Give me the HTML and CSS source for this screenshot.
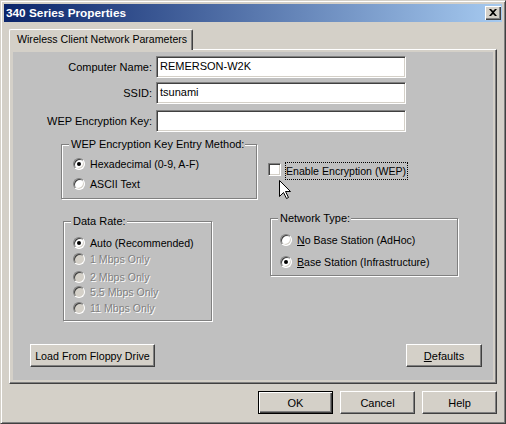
FILE: index.html
```html
<!DOCTYPE html>
<html>
<head>
<meta charset="utf-8">
<link rel="stylesheet" href="styles.css">
</head>
<body>
<div class="window">
  <div class="titlebar">
    <span class="title">340 Series Properties</span>
    <span class="close"><svg width="8" height="7" viewBox="0 0 8 7"><path d="M0 0h2l2 2 2-2h2L5 3.5 8 7H6L4 5 2 7H0l3-3.5z" fill="#000"/></svg></span>
  </div>
  <div class="tabs"><div class="tab">Wireless Client Network Parameters</div></div>
  <div class="panel">
    <div class="page">
      <div class="field f1"><span class="label">Computer Name:</span><div class="input">REMERSON-W2K</div></div>
      <div class="field f2"><span class="label">SSID:</span><div class="input">tsunami</div></div>
      <div class="field f3"><span class="label">WEP Encryption Key:</span><div class="input"></div></div>

      <div class="middle">
        <div class="col-left">
          <div class="group g-wep">
            <span class="legend">WEP Encryption Key Entry Method:</span>
            <div class="opt"><span class="radio checked"></span><span class="txt">Hexadecimal (0-9, A-F)</span></div>
            <div class="opt o2"><span class="radio"></span><span class="txt">ASCII Text</span></div>
          </div>
          <div class="group g-rate">
            <span class="legend">Data Rate:</span>
            <div class="opt"><span class="radio checked"></span><span class="txt">Auto (Recommended)</span></div>
            <div class="opt r1 disabled"><span class="radio"></span><span class="txt">1 Mbps Only</span></div>
            <div class="opt r2 disabled"><span class="radio"></span><span class="txt">2 Mbps Only</span></div>
            <div class="opt r3 disabled"><span class="radio"></span><span class="txt">5.5 Mbps Only</span></div>
            <div class="opt r4 disabled"><span class="radio"></span><span class="txt">11 Mbps Only</span></div>
          </div>
        </div>
        <div class="col-right">
          <div class="check-row"><span class="checkbox"></span><span class="focus">Enable Encryption (WEP)</span></div>
          <svg class="cursor" width="12" height="20" viewBox="0 0 12 20"><path d="M0.5 0.5V16.5L4.5 12.5L7.5 18.5L9.5 17.5L6.5 11.5H11.5Z" fill="#fff" stroke="#000" stroke-width="1" stroke-linejoin="miter"/></svg>
          <div class="group g-net">
            <span class="legend">Network Type:</span>
            <div class="opt"><span class="radio"></span><span class="txt"><u>N</u>o Base Station (AdHoc)</span></div>
            <div class="opt n2"><span class="radio checked"></span><span class="txt"><u>B</u>ase Station (Infrastructure)</span></div>
          </div>
        </div>
      </div>

      <div class="page-buttons">
        <div class="btn load">Load From Floppy Drive</div>
        <div class="btn defaults"><span><u>D</u>efaults</span></div>
      </div>
    </div>
  </div>
  <div class="buttons">
    <div class="btn default">OK</div>
    <div class="btn">Cancel</div>
    <div class="btn">Help</div>
  </div>
</div>
</body>
</html>
```

FILE: styles.css
```css
* { box-sizing: border-box; }
html, body { margin: 0; padding: 0; background: #d4d0c8; }
body {
  font-family: "Liberation Sans", Arial, sans-serif;
  font-size: 11px;
  color: #000;
}
.window {
  width: 506px;
  height: 424px;
  border: 1px solid;
  border-color: #d4d0c8 #404040 #404040 #d4d0c8;
  box-shadow: inset 1px 1px 0 #fff, inset -1px -1px 0 #808080;
  padding: 3px;
  background: #d4d0c8;
  display: flex;
  flex-direction: column;
}
.titlebar {
  height: 18px;
  flex: none;
  display: flex;
  align-items: center;
  justify-content: space-between;
  padding-left: 2px;
  background: linear-gradient(to right, #0a246a, #a6caf0);
}
.title {
  color: #fff;
  font-weight: bold;
  font-size: 11.8px;
}
.close {
  width: 16px;
  height: 14px;
  margin-right: 1px;
  background: #d4d0c8;
  box-shadow: inset 1px 1px 0 #fff, inset -1px -1px 0 #404040, inset -2px -2px 0 #808080;
  display: flex;
  align-items: center;
  justify-content: center;
  padding-bottom: 1px;
}
.tabs {
  margin-top: 7px;
  padding-left: 5px;
  height: 20px;
  flex: none;
  display: flex;
}
.tab {
  position: relative;
  z-index: 1;
  width: 184px;
  height: 21px;
  background: #d4d0c8;
  border-left: 1px solid #fff;
  border-top: 1px solid #fff;
  border-right: 1px solid #404040;
  border-top-left-radius: 2px;
  border-top-right-radius: 2px;
  box-shadow: inset -1px 0 0 #808080;
  padding-left: 7px;
  line-height: 18px;
  white-space: nowrap;
  font-size: 10.6px;
}
.panel {
  margin: 0 5px;
  height: 335px;
  flex: none;
  border: 1px solid;
  border-color: #fff #404040 #404040 #fff;
  box-shadow: inset -1px -1px 0 #808080;
  padding: 2px 3px 3px 3px;
  display: flex;
}
.page {
  flex: 1;
  background: #c0c0c0;
  display: flex;
  flex-direction: column;
}
.field {
  display: flex;
  align-items: center;
  height: 22px;
  flex: none;
}
.f1 { margin-top: 4px; }
.f2 { margin-top: 4px; }
.f3 { margin-top: 6px; }
.label {
  width: 139px;
  text-align: right;
  white-space: nowrap;
}
.input {
  margin-left: 4px;
  width: 250px;
  height: 22px;
  background: #fff;
  border: 1px solid;
  border-color: #808080 #fff #fff #808080;
  box-shadow: inset 1px 1px 0 #404040, inset -1px -1px 0 #d4d0c8;
  padding-left: 3px;
  line-height: 19px;
}
.middle {
  display: flex;
  align-items: flex-start;
  flex: none;
}
.col-left {
  margin-left: 48px;
  width: 196px;
}
.col-right {
  margin-left: 11px;
  position: relative;
}
.group {
  position: relative;
  border: 1px solid #808080;
  box-shadow: 1px 1px 0 #fff, inset 1px 1px 0 #fff;
}
.legend {
  position: absolute;
  top: -8px;
  left: 7px;
  padding: 0 1px 0 2px;
  background: #c0c0c0;
  line-height: 14px;
  white-space: nowrap;
}
.g-wep {
  margin-top: 12px;
  width: 196px;
  height: 55px;
  padding: 12px 0 0 11px;
}
.g-rate {
  margin-top: 22px;
  margin-left: 2px;
  width: 149px;
  height: 100px;
  padding: 14px 0 0 9px;
}
.g-net {
  margin-top: 38px;
  margin-left: 2px;
  width: 188px;
  height: 58px;
  padding: 14px 0 0 9px;
}
.opt {
  display: flex;
  align-items: center;
  height: 13px;
  white-space: nowrap;
}
.o2 { margin-top: 7px; }
.r1 { margin-top: 3px; }
.r2 { margin-top: 5px; }
.r3 { margin-top: 2px; }
.r4 { margin-top: 3px; }
.n2 { margin-top: 9px; }
.txt { margin-left: 5px; font-size: 10.6px; }
.radio {
  flex: none;
  position: relative;
  width: 12px;
  height: 12px;
  border-radius: 50%;
  border: 1px solid;
  border-color: #808080 #fff #fff #808080;
  background: #fff;
  box-shadow: inset 1px 1px 0 #404040, inset -1px -1px 0 #d4d0c8;
}
.radio.checked::after {
  content: "";
  position: absolute;
  left: 3px;
  top: 3px;
  width: 4px;
  height: 4px;
  border-radius: 50%;
  background: #000;
}
.disabled .radio { background: #d4d0c8; }
.disabled .txt {
  color: #808080;
  text-shadow: 1px 1px 0 #fff;
}
.check-row {
  margin-top: 30px;
  height: 18px;
  display: flex;
  align-items: flex-start;
}
.checkbox {
  flex: none;
  margin-top: 1px;
  width: 13px;
  height: 13px;
  background: #fff;
  border: 1px solid;
  border-color: #808080 #fff #fff #808080;
  box-shadow: inset 1px 1px 0 #404040, inset -1px -1px 0 #d4d0c8;
}
.focus {
  margin-left: 4px;
  border: 1px dotted #000;
  line-height: 16px;
  padding: 0 1px 0 0;
  white-space: nowrap;
  font-size: 10.6px;
}
.cursor {
  position: absolute;
  left: 11px;
  top: 48px;
}
.page-buttons {
  margin-top: 23px;
  padding: 0 11px 0 17px;
  display: flex;
  justify-content: space-between;
  flex: none;
}
.btn {
  height: 23px;
  width: 75px;
  background: #d4d0c8;
  border: 1px solid;
  border-color: #fff #404040 #404040 #fff;
  box-shadow: inset -1px -1px 0 #808080;
  display: flex;
  align-items: center;
  justify-content: center;
  white-space: nowrap;
}
.load { width: 125px; font-size: 10.7px; }
.defaults { width: 76px; }
.buttons {
  margin-top: 7px;
  padding-right: 5px;
  display: flex;
  justify-content: flex-end;
  gap: 7px;
  flex: none;
}
.btn.default {
  border: 1px solid #000;
  box-shadow: inset 1px 1px 0 #fff, inset -1px -1px 0 #404040, inset -2px -2px 0 #808080;
}
```
